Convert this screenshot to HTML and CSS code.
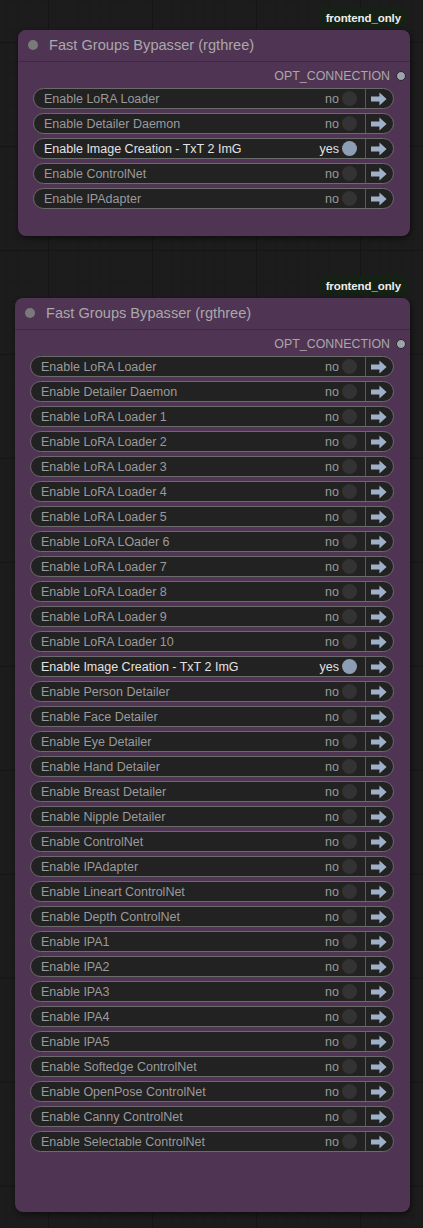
FILE: index.html
```html
<!DOCTYPE html>
<html lang="en">
<head>
<meta charset="utf-8">
<title>Fast Groups Bypasser</title>
<link rel="stylesheet" href="styles.css">
</head>
<body>
<svg width="0" height="0" class="defs" aria-hidden="true">
  <defs>
    <symbol id="arrow" viewBox="0 0 16 14">
      <path d="M0 4.6 H8.4 V0.6 L15.6 7 L8.4 13.4 V9.4 H0 Z" fill="currentColor"/>
    </symbol>
  </defs>
</svg>
<main class="canvas">

  <section class="group group--a">
    <div class="badge-row"><span class="badge">frontend_only</span></div>
    <div class="node node--short">
      <div class="node-title"><span class="title-dot"></span><span class="title-text">Fast Groups Bypasser (rgthree)</span></div>
      <div class="node-body">
        <div class="output"><span class="output-label">OPT_CONNECTION</span><span class="slot"></span></div>
        <div class="rows">
          <div class="row"><span class="label">Enable LoRA Loader</span><span class="state">no</span><span class="toggle"></span><span class="nav"><svg><use href="#arrow"/></svg></span></div>
          <div class="row"><span class="label">Enable Detailer Daemon</span><span class="state">no</span><span class="toggle"></span><span class="nav"><svg><use href="#arrow"/></svg></span></div>
          <div class="row row--on"><span class="label">Enable Image Creation - TxT 2 ImG</span><span class="state">yes</span><span class="toggle"></span><span class="nav"><svg><use href="#arrow"/></svg></span></div>
          <div class="row"><span class="label">Enable ControlNet</span><span class="state">no</span><span class="toggle"></span><span class="nav"><svg><use href="#arrow"/></svg></span></div>
          <div class="row"><span class="label">Enable IPAdapter</span><span class="state">no</span><span class="toggle"></span><span class="nav"><svg><use href="#arrow"/></svg></span></div>
        </div>
      </div>
    </div>
  </section>

  <section class="group group--b">
    <div class="badge-row"><span class="badge">frontend_only</span></div>
    <div class="node node--tall">
      <div class="node-title"><span class="title-dot"></span><span class="title-text">Fast Groups Bypasser (rgthree)</span></div>
      <div class="node-body">
        <div class="output"><span class="output-label">OPT_CONNECTION</span><span class="slot"></span></div>
        <div class="rows">
          <div class="row"><span class="label">Enable LoRA Loader</span><span class="state">no</span><span class="toggle"></span><span class="nav"><svg><use href="#arrow"/></svg></span></div>
          <div class="row"><span class="label">Enable Detailer Daemon</span><span class="state">no</span><span class="toggle"></span><span class="nav"><svg><use href="#arrow"/></svg></span></div>
          <div class="row"><span class="label">Enable LoRA Loader 1</span><span class="state">no</span><span class="toggle"></span><span class="nav"><svg><use href="#arrow"/></svg></span></div>
          <div class="row"><span class="label">Enable LoRA Loader 2</span><span class="state">no</span><span class="toggle"></span><span class="nav"><svg><use href="#arrow"/></svg></span></div>
          <div class="row"><span class="label">Enable LoRA Loader 3</span><span class="state">no</span><span class="toggle"></span><span class="nav"><svg><use href="#arrow"/></svg></span></div>
          <div class="row"><span class="label">Enable LoRA Loader 4</span><span class="state">no</span><span class="toggle"></span><span class="nav"><svg><use href="#arrow"/></svg></span></div>
          <div class="row"><span class="label">Enable LoRA Loader 5</span><span class="state">no</span><span class="toggle"></span><span class="nav"><svg><use href="#arrow"/></svg></span></div>
          <div class="row"><span class="label">Enable LoRA LOader 6</span><span class="state">no</span><span class="toggle"></span><span class="nav"><svg><use href="#arrow"/></svg></span></div>
          <div class="row"><span class="label">Enable LoRA Loader 7</span><span class="state">no</span><span class="toggle"></span><span class="nav"><svg><use href="#arrow"/></svg></span></div>
          <div class="row"><span class="label">Enable LoRA Loader 8</span><span class="state">no</span><span class="toggle"></span><span class="nav"><svg><use href="#arrow"/></svg></span></div>
          <div class="row"><span class="label">Enable LoRA Loader 9</span><span class="state">no</span><span class="toggle"></span><span class="nav"><svg><use href="#arrow"/></svg></span></div>
          <div class="row"><span class="label">Enable LoRA Loader 10</span><span class="state">no</span><span class="toggle"></span><span class="nav"><svg><use href="#arrow"/></svg></span></div>
          <div class="row row--on"><span class="label">Enable Image Creation - TxT 2 ImG</span><span class="state">yes</span><span class="toggle"></span><span class="nav"><svg><use href="#arrow"/></svg></span></div>
          <div class="row"><span class="label">Enable Person Detailer</span><span class="state">no</span><span class="toggle"></span><span class="nav"><svg><use href="#arrow"/></svg></span></div>
          <div class="row"><span class="label">Enable Face Detailer</span><span class="state">no</span><span class="toggle"></span><span class="nav"><svg><use href="#arrow"/></svg></span></div>
          <div class="row"><span class="label">Enable Eye Detailer</span><span class="state">no</span><span class="toggle"></span><span class="nav"><svg><use href="#arrow"/></svg></span></div>
          <div class="row"><span class="label">Enable Hand Detailer</span><span class="state">no</span><span class="toggle"></span><span class="nav"><svg><use href="#arrow"/></svg></span></div>
          <div class="row"><span class="label">Enable Breast Detailer</span><span class="state">no</span><span class="toggle"></span><span class="nav"><svg><use href="#arrow"/></svg></span></div>
          <div class="row"><span class="label">Enable Nipple Detailer</span><span class="state">no</span><span class="toggle"></span><span class="nav"><svg><use href="#arrow"/></svg></span></div>
          <div class="row"><span class="label">Enable ControlNet</span><span class="state">no</span><span class="toggle"></span><span class="nav"><svg><use href="#arrow"/></svg></span></div>
          <div class="row"><span class="label">Enable IPAdapter</span><span class="state">no</span><span class="toggle"></span><span class="nav"><svg><use href="#arrow"/></svg></span></div>
          <div class="row"><span class="label">Enable Lineart ControlNet</span><span class="state">no</span><span class="toggle"></span><span class="nav"><svg><use href="#arrow"/></svg></span></div>
          <div class="row"><span class="label">Enable Depth ControlNet</span><span class="state">no</span><span class="toggle"></span><span class="nav"><svg><use href="#arrow"/></svg></span></div>
          <div class="row"><span class="label">Enable IPA1</span><span class="state">no</span><span class="toggle"></span><span class="nav"><svg><use href="#arrow"/></svg></span></div>
          <div class="row"><span class="label">Enable IPA2</span><span class="state">no</span><span class="toggle"></span><span class="nav"><svg><use href="#arrow"/></svg></span></div>
          <div class="row"><span class="label">Enable IPA3</span><span class="state">no</span><span class="toggle"></span><span class="nav"><svg><use href="#arrow"/></svg></span></div>
          <div class="row"><span class="label">Enable IPA4</span><span class="state">no</span><span class="toggle"></span><span class="nav"><svg><use href="#arrow"/></svg></span></div>
          <div class="row"><span class="label">Enable IPA5</span><span class="state">no</span><span class="toggle"></span><span class="nav"><svg><use href="#arrow"/></svg></span></div>
          <div class="row"><span class="label">Enable Softedge ControlNet</span><span class="state">no</span><span class="toggle"></span><span class="nav"><svg><use href="#arrow"/></svg></span></div>
          <div class="row"><span class="label">Enable OpenPose ControlNet</span><span class="state">no</span><span class="toggle"></span><span class="nav"><svg><use href="#arrow"/></svg></span></div>
          <div class="row"><span class="label">Enable Canny ControlNet</span><span class="state">no</span><span class="toggle"></span><span class="nav"><svg><use href="#arrow"/></svg></span></div>
          <div class="row"><span class="label">Enable Selectable ControlNet</span><span class="state">no</span><span class="toggle"></span><span class="nav"><svg><use href="#arrow"/></svg></span></div>
        </div>
      </div>
    </div>
  </section>

</main>
</body>
</html>
```

FILE: styles.css
```css
* { box-sizing: border-box; }

html, body {
  margin: 0;
  padding: 0;
}

body {
  width: 423px;
  height: 1228px;
  overflow: hidden;
  font-family: "Liberation Sans", Arial, sans-serif;
  background-color: #1c1c1c;
  background-image:
    linear-gradient(to right, #151515 1px, transparent 1px),
    linear-gradient(to bottom, #151515 1px, transparent 1px),
    linear-gradient(to right, #1a1a1a 1px, transparent 1px),
    linear-gradient(to bottom, #1a1a1a 1px, transparent 1px);
  background-size: 104px 104px, 104px 104px, 10.4px 10.4px, 10.4px 10.4px;
  background-position: 48px 42px, 48px 42px, 6px 0, 6px 0;
}

.defs { position: absolute; }

.canvas {
  display: flex;
  flex-direction: column;
}

.group {
  display: flex;
  flex-direction: column;
  padding-right: 13px;
}

.group--a { padding-left: 18px; padding-top: 8px; }
.group--b { padding-left: 15px; padding-top: 40px; }

.badge-row {
  display: flex;
  justify-content: flex-end;
  padding-right: 3px;
}

.badge {
  height: 20px;
  padding: 0 6px;
  display: flex;
  align-items: center;
  background: #162116;
  color: #eeeeee;
  font-size: 11.5px;
  font-weight: bold;
  border-radius: 5px;
  letter-spacing: -0.1px;
}

.node {
  margin-top: 2px;
  background: #503453;
  border-radius: 8px;
  box-shadow: 1px 2px 5px rgba(0, 0, 0, 0.55);
  display: flex;
  flex-direction: column;
}

.node--short { padding-bottom: 27px; }
.node--tall { padding-bottom: 60px; }

.node-title {
  height: 32px;
  display: flex;
  align-items: center;
  padding-left: 10px;
  border-bottom: 1px solid #3f2a42;
  padding-bottom: 1px;
}

.title-dot {
  width: 10px;
  height: 10px;
  border-radius: 50%;
  background: #7a7a7a;
  flex: none;
}

.title-text {
  margin-left: 11px;
  font-size: 14.6px;
  color: #a9a9a9;
  white-space: nowrap;
}

.node-body {
  display: flex;
  flex-direction: column;
  padding-left: 15px;
  padding-right: 16px;
}

.output {
  height: 14px;
  margin-top: 7px;
  display: flex;
  align-items: center;
  justify-content: flex-end;
  margin-right: -12px;
}

.output-label {
  font-size: 12.4px;
  color: #a8a8a8;
  white-space: nowrap;
}

.slot {
  width: 10px;
  height: 10px;
  border-radius: 50%;
  background: #9ea3ad;
  border: 1.5px solid #262626;
  margin-left: 6px;
  flex: none;
}

.rows {
  margin-top: 5px;
  display: flex;
  flex-direction: column;
  gap: 4px;
}

.row {
  height: 21px;
  display: flex;
  align-items: center;
  background: #222222;
  border: 1px solid #6b6b6b;
  border-radius: 11px;
  padding-left: 10px;
  font-size: 12.5px;
  color: #9a9a9a;
  white-space: nowrap;
  overflow: hidden;
}

.label {
  flex: 1;
  min-width: 0;
}

.state {
  margin-right: 3px;
}

.toggle {
  width: 15px;
  height: 15px;
  border-radius: 50%;
  background: #333333;
  flex: none;
  margin-right: 8px;
}

.row--on { color: #e2e2e2; }
.row--on .toggle { background: #8d9db3; }

.nav {
  width: 28px;
  height: 100%;
  border-left: 1px solid #5a5a5a;
  display: flex;
  align-items: center;
  justify-content: center;
  color: #9fb1c8;
  flex: none;
  padding-right: 2px;
}

.nav svg {
  width: 16px;
  height: 14px;
}
```
